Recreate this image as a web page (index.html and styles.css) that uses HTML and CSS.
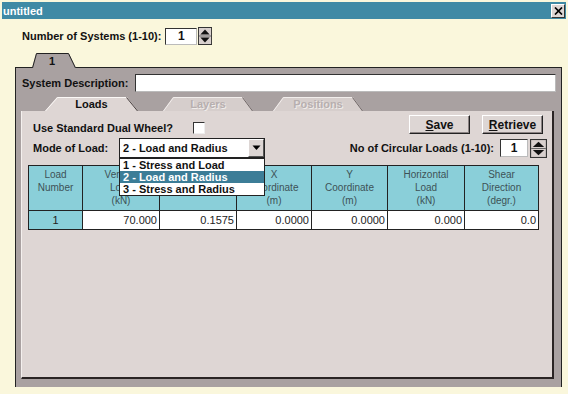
FILE: index.html
```html
<!DOCTYPE html>
<html lang="en">
<head>
  <meta charset="UTF-8" />
  <meta name="viewport" content="width=device-width, initial-scale=1.0" />
  <title>untitled</title>
  <link rel="stylesheet" href="styles.css">
</head>
<body>
  <div class="window">
    <div class="titlebar">
      <span class="title">untitled</span>
      <span class="close-btn">
        <svg width="9" height="8" viewBox="0 0 9 8"><path d="M1 0.5 L8 7.5 M8 0.5 L1 7.5" stroke="#000" stroke-width="1.7" /></svg>
      </span>
    </div>

    <div class="systems-row">
      <label class="lbl">Number of Systems (1-10):</label>
      <div class="field systems-field">1</div>
      <svg class="spin systems-spin" viewBox="0 0 15 18" preserveAspectRatio="none">
        <rect x="0.5" y="0.5" width="14" height="17" fill="#d8d0ce" stroke="#333" />
        <path d="M2.5 7.5 L7.5 2.5 L12.5 7.5 Z" fill="#111" />
        <path d="M2.5 10.5 L7.5 15.5 L12.5 10.5 Z" fill="#111" />
        <path d="M1 9 H14" stroke="#666" />
      </svg>
    </div>

    <div class="top-tabs">
      <div class="tab tab-sys">
        <svg width="44" height="15" viewBox="0 0 44 15">
          <path d="M0 15 L4 0.5 L37 0.5 L44 15 Z" fill="#a9a1a1" />
          <path d="M0.5 15 L4.5 0.5 L36.5 0.5 L43.5 15" fill="none" stroke="#222" />
        </svg>
        <span class="tab-label">1</span>
      </div>
    </div>

    <div class="outer-panel">
      <div class="desc-row">
        <label class="lbl desc-lbl">System Description:</label>
        <div class="field desc-field"></div>
      </div>

      <div class="inner-tabs">
        <div class="tab tab-loads">
          <svg width="93" height="14" viewBox="0 0 93 14">
            <path d="M0 14 L12 0 L82 0 L93 14 Z" fill="#ded6d4" />
            <path d="M0.5 14 L12.5 0.5 L81.5 0.5" fill="none" stroke="#fbf8f6" />
            <path d="M81.5 0.5 L92.5 14" fill="none" stroke="#4a4242" />
          </svg>
          <span class="tab-label">Loads</span>
        </div>
        <div class="tab tab-off tab-layers">
          <svg width="90" height="14" viewBox="0 0 90 14">
            <path d="M0 14 L10 0 L80 0 L90 14 Z" fill="#d6cecc" />
            <path d="M0.5 14 L10.5 0.5 L79.5 0.5" fill="none" stroke="#f2eeec" />
            <path d="M79.5 0.5 L89.5 14" fill="none" stroke="#6e6666" />
          </svg>
          <span class="tab-label">Layers</span>
        </div>
        <div class="tab tab-off tab-positions">
          <svg width="90" height="14" viewBox="0 0 90 14">
            <path d="M0 14 L10 0 L80 0 L90 14 Z" fill="#d6cecc" />
            <path d="M0.5 14 L10.5 0.5 L79.5 0.5" fill="none" stroke="#f2eeec" />
            <path d="M79.5 0.5 L89.5 14" fill="none" stroke="#6e6666" />
          </svg>
          <span class="tab-label">Positions</span>
        </div>
      </div>

      <div class="inner-panel">
        <div class="row-top">
          <label class="lbl wheel-lbl">Use Standard Dual Wheel?</label>
          <span class="checkbox"></span>
          <button class="btn btn-save"><u>S</u>ave</button>
          <button class="btn btn-retrieve"><u>R</u>etrieve</button>
        </div>

        <div class="row-mode">
          <label class="lbl mode-lbl">Mode of Load:</label>
          <div class="combo">
            <span class="combo-text">2 - Load and Radius</span>
            <span class="combo-arrow">
              <svg width="9" height="6" viewBox="0 0 9 6"><path d="M0.5 0.5 L8.5 0.5 L4.5 5 Z" fill="#000" /></svg>
            </span>
            <ul class="combo-list">
              <li>1 - Stress and Load</li>
              <li class="selected">2 - Load and Radius</li>
              <li>3 - Stress and Radius</li>
            </ul>
          </div>
          <div class="circ-group">
            <label class="lbl">No of Circular Loads (1-10):</label>
            <div class="field circ-field">1</div>
            <svg class="spin circ-spin" viewBox="0 0 15 18" preserveAspectRatio="none">
              <rect x="0.5" y="0.5" width="14" height="17" fill="#d8d0ce" stroke="#333" />
              <path d="M2.5 7.5 L7.5 2.5 L12.5 7.5 Z" fill="#111" />
              <path d="M2.5 10.5 L7.5 15.5 L12.5 10.5 Z" fill="#111" />
              <path d="M1 9 H14" stroke="#666" />
            </svg>
          </div>
        </div>

        <table class="loads-table">
          <colgroup>
            <col class="c-num">
            <col class="c-vert">
            <col class="c-rad">
            <col class="c-x">
            <col class="c-y">
            <col class="c-hor">
            <col class="c-shear">
          </colgroup>
          <tr>
            <th>Load<br>Number</th>
            <th>Vertical<br>Load<br>(kN)</th>
            <th>Radius<br>(m)</th>
            <th>X<br>Coordinate<br>(m)</th>
            <th>Y<br>Coordinate<br>(m)</th>
            <th>Horizontal<br>Load<br>(kN)</th>
            <th>Shear<br>Direction<br>(degr.)</th>
          </tr>
          <tr>
            <td class="num-cell">1</td>
            <td>70.000</td>
            <td>0.1575</td>
            <td>0.0000</td>
            <td>0.0000</td>
            <td>0.000</td>
            <td>0.0</td>
          </tr>
        </table>
      </div>
    </div>
  </div>
</body>
</html>
```

FILE: styles.css
```css
* {
  box-sizing: border-box;
}
body {
  margin: 0;
  width: 568px;
  height: 394px;
  overflow: hidden;
  background: #faf7dc;
  font-family: 'Liberation Sans', Arial, sans-serif;
  font-size: 11px;
  color: #111;
}
.window {
  padding: 2px 2px 0 2px;
}
.titlebar {
  height: 17px;
  background: #3f8aa5;
  display: flex;
  align-items: center;
  justify-content: space-between;
  padding: 0 1px 0 1px;
}
.title {
  color: #fff;
  font-weight: bold;
  font-size: 11px;
}
.close-btn {
  width: 14px;
  height: 14px;
  background: #ddd6d4;
  border: 1px solid;
  border-color: #fff #333 #333 #fff;
  display: flex;
  align-items: center;
  justify-content: center;
}
.lbl {
  font-weight: bold;
  font-size: 11px;
  white-space: nowrap;
}
.field {
  background: #fff;
  border: 1px solid;
  border-color: #333 #bbb #bbb #333;
  font-weight: bold;
  font-size: 12px;
  display: flex;
  align-items: center;
  justify-content: center;
}
.spin {
  display: block;
}

/* number of systems */
.systems-row {
  display: flex;
  align-items: center;
  height: 18px;
  margin-top: 8px;
  padding-left: 20px;
}
.systems-field {
  width: 32px;
  height: 17px;
  margin-left: 4px;
}
.systems-spin {
  width: 14px;
  height: 18px;
  margin-left: 1px;
}

/* tabs */
.tab {
  display: grid;
}
.tab > * {
  grid-area: 1 / 1;
}
.tab svg {
  display: block;
}
.tab-label {
  align-self: center;
  justify-self: center;
  font-weight: bold;
  font-size: 11px;
}
.top-tabs {
  margin-top: 8px;
  padding-left: 30px;
  height: 14px;
}
.tab-sys {
  position: relative;
  z-index: 1;
  width: 44px;
}
.tab-sys .tab-label {
  padding-right: 4px;
}

/* outer system panel */
.outer-panel {
  margin-left: 13px;
  width: 547px;
  height: 320px;
  background: #a9a1a1;
  border: 1px solid #222;
  border-bottom: none;
  padding: 6px 0 0 5px;
}
.desc-row {
  display: flex;
  align-items: center;
  height: 18px;
  padding-left: 1px;
}
.desc-lbl {
  width: 113px;
}
.desc-field {
  width: 421px;
  height: 18px;
}
.inner-tabs {
  display: flex;
  margin-top: 5px;
  height: 14px;
  padding-left: 24px;
}
.tab-layers {
  margin-left: 25px;
}
.tab-positions {
  margin-left: 20px;
}
.tab-off .tab-label {
  color: #b7afaf;
  text-shadow: 1px 1px 0 #f0ecea;
}

/* inner loads panel */
.inner-panel {
  width: 533px;
  height: 268px;
  background: #ded6d4;
  border-left: 1px solid #f4f0ee;
  border-right: 2px solid #2a2424;
  border-bottom: 2px solid #2a2424;
  padding: 4px 0 0 6px;
}
.row-top {
  display: flex;
  align-items: flex-end;
  height: 19px;
  padding-left: 5px;
  padding-right: 9px;
}
.wheel-lbl {
  width: 160px;
  line-height: 12px;
}
.checkbox {
  width: 12px;
  height: 12px;
  background: #fff;
  border: 1px solid;
  border-color: #333 #eee #eee #333;
}
.btn {
  width: 61px;
  height: 19px;
  padding: 0;
  background: #ddd6d4;
  border: 1px solid;
  border-color: #fff #222 #222 #fff;
  box-shadow: inset -1px -1px 0 #8a8282;
  font-family: 'Liberation Sans', Arial, sans-serif;
  font-weight: bold;
  font-size: 12px;
  color: #111;
}
.btn-save {
  margin-left: auto;
}
.btn-retrieve {
  margin-left: 12px;
}
.row-mode {
  display: flex;
  align-items: center;
  height: 20px;
  margin-top: 4px;
  padding-left: 5px;
}
.mode-lbl {
  width: 86px;
}
.combo {
  position: relative;
  width: 146px;
  height: 20px;
  background: #fff;
  border: 1px solid #222;
  display: flex;
  align-items: center;
}
.combo-text {
  flex: 1;
  padding-left: 3px;
  font-weight: bold;
  font-size: 11px;
  white-space: nowrap;
}
.combo-arrow {
  width: 16px;
  height: 18px;
  background: #ddd6d4;
  border: 1px solid;
  border-color: #fff #555 #555 #fff;
  display: flex;
  align-items: center;
  justify-content: center;
}
.combo-list {
  position: absolute;
  top: 19px;
  left: -1px;
  width: 146px;
  margin: 0;
  padding: 0;
  list-style: none;
  background: #fff;
  border: 1px solid #222;
  z-index: 2;
}
.combo-list li {
  height: 12px;
  line-height: 12px;
  padding-left: 3px;
  font-weight: bold;
  font-size: 11px;
  white-space: nowrap;
}
.combo-list li.selected {
  background: #3c7d97;
  color: #fff;
}
.circ-group {
  display: flex;
  align-items: center;
  margin-left: auto;
  margin-right: 5px;
}
.circ-field {
  width: 28px;
  height: 18px;
  margin-left: 6px;
}
.circ-spin {
  width: 17px;
  height: 19px;
  margin-left: 2px;
}

/* table */
.loads-table {
  margin-top: 7px;
  width: 510px;
  border-collapse: collapse;
  table-layout: fixed;
  border: 1px solid #222;
}
.c-num { width: 54px; }
.c-vert { width: 77px; }
.c-rad { width: 77px; }
.c-x { width: 75px; }
.c-y { width: 76px; }
.c-hor { width: 77px; }
.c-shear { width: 74px; }
.loads-table th,
.loads-table td {
  border: 1px solid #222;
}
.loads-table th {
  height: 45px;
  background: #8acfd9;
  vertical-align: top;
  padding: 2px 0 0;
  font-weight: normal;
  font-size: 10px;
  line-height: 13px;
  color: #3d5257;
  text-align: center;
}
.loads-table td {
  height: 19px;
  background: #fff;
  text-align: right;
  padding: 0 2px;
  font-size: 11px;
  color: #222;
}
.loads-table td.num-cell {
  background: #8acfd9;
  text-align: center;
}
```
